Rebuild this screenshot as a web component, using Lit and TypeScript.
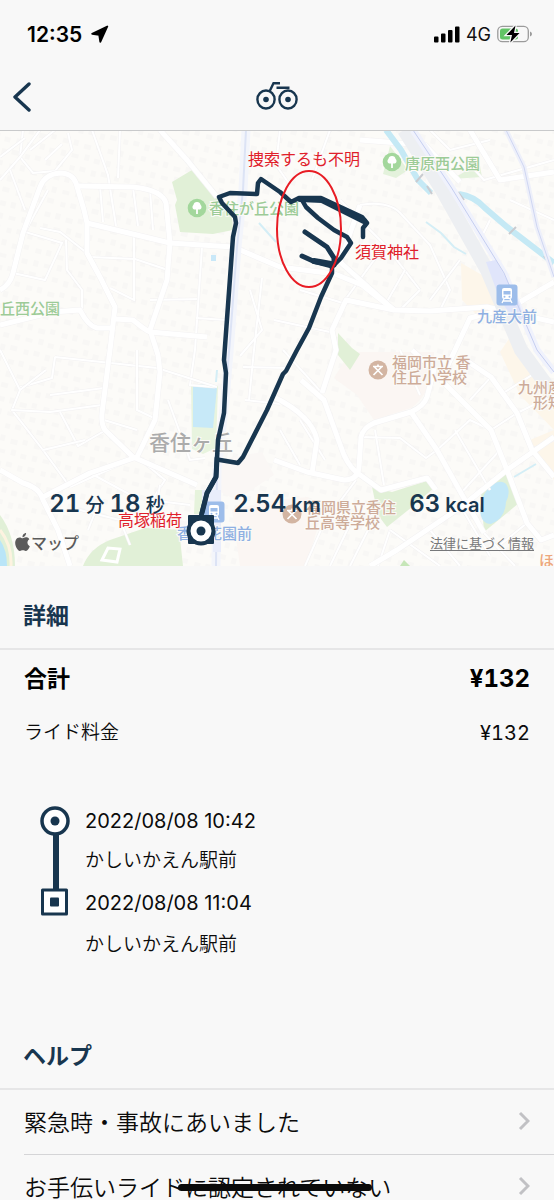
import { LitElement, html, svg, css } from "lit";
import { customElement } from "lit/decorators.js";

const MAIN_ROADS = [
  "M0 290Q10 285 13 273L23 233L40 187Q45 174 60 173Q72 173 76 183L84 210L87 223V253L100 277L115 307L110 350L102 413Q101 424 105 430L133 457L197 485",
  "M78 186L133 187Q162 190 166 203L170 243L167 280L150 330L158 355L160 372L155 420L137 457L90 473L43 497",
  "M87 223L170 243L233 247L280 267L335 274L362 285L394 310L430 311L487 307L554 322",
  "M160 130L187 160L217 197",
  "M0 325L53 312L80 310Q88 326 97 328H112",
  "M115 319L133 320Q145 330 150 332L207 337",
  "M0 470L23 483Q40 488 43 500L58 530L70 566",
  "M274 460L307 472L344 480Q358 480 359 467L361 437Q363 428 374 423L411 412Q424 406 427 397L434 370L412 350",
  "M274 397Q312 416 317 440L312 473",
  "M301 380L324 400L341 447Q346 463 356 472L381 490L427 478L436 490",
  "M411 412L437 450L461 493L484 533",
  "M441 380L491 430L507 470L527 523L541 540L554 535",
  "M461 357L491 377L517 413L532 450L554 477",
  "M554 437L507 470L461 507L397 550L370 566",
  "M394 310L340 262L360 205",
  "M394 310L346 300L332 330L336 350L322 393",
  "M360 140L425 145L460 182",
  "M554 282L510 308L470 318L441 380",
  "M470 130L500 180L554 172",
];

const MINOR_ROADS = [
  "M23 130L20 157L33 173L55 171L72 150L68 133",
  "M0 157L25 138M0 180L20 157L40 130M30 150L55 130M45 160L62 144",
  "M92 130L108 175L116 226M120 130L118 178M133 187L138 226M150 190L153 230M100 186L103 222",
  "M10 170L25 210M13 273L45 280L62 243L25 232L48 190",
  "M87 253L60 232L40 228M66 240L67 270L82 290V309",
  "M90 257L135 259L168 270M134 235V300L110 288M150 300L200 299",
  "M202 247L195 350L190 385L215 387M196 318L226 320",
  "M55 357L157 368L217 387M55 357L52 378L18 388",
  "M0 350L20 390L12 410L43 450L70 487M20 390L46 370",
  "M12 410L50 412L102 405M60 412L78 446L106 430M50 395L104 388",
  "M43 450L85 440M70 487L137 457L165 480L152 500M90 473L140 500",
  "M137 350V410L154 418M104 420L137 430M168 400L190 460L205 458",
  "M250 290L262 330L240 356M262 278L254 350L249 400M243 367L290 368M245 400L280 404",
  "M280 130L276 165L290 185M330 130L312 180M340 200L385 245L420 290",
  "M360 205Q390 200 402 215L430 245L450 290L440 310",
  "M385 245L345 300M405 270L385 305M420 290L400 310M460 260L430 300M300 290L346 304",
  "M430 130L450 150L490 140M466 160L484 180L554 160M490 220L480 240M510 200L554 220",
  "M274 320L330 332M283 350L322 393M300 420L325 460M280 430L300 465",
  "M361 437L400 438L426 458L437 450M375 430L384 485M400 350L420 395",
  "M437 450L470 420L491 430M461 493L500 450M455 430L490 490M491 377L470 400",
  "M517 413L491 430M500 395L540 370M517 413L554 395M530 450L554 440",
  "M324 523L356 480M305 566L324 523L360 520M330 566L350 524M350 566L368 530M378 566L390 530",
  "M390 530L440 566M430 530L460 566M461 507L490 556M484 533L515 566M527 523L500 545",
  "M80 510L120 520L130 545M100 500L88 530M150 500L190 505M160 485L155 515",
];

const PARK_TREE = "M0-6a3.6 3.6 0 0 1 3.6 3a2.8 2.8 0 0 1-.6 4.6H.9V6H-.9V1.600H-3a2.800 2.800 0 0 1-.6-4.600A3.600 3.600 0 0 1 0-6z";

const parkPin = (x: number, y: number) => svg`
  <g transform="translate(${x} ${y})">
    <circle r="9.300" fill="#a3d79c" />
    <path d=${PARK_TREE} fill="#fff" />
  </g>`;

const schoolPin = (x: number, y: number) => svg`
  <g transform="translate(${x} ${y})">
    <circle r="9.500" fill="#d3b5a2" />
    <path d="M-5-3.500H5M0-5.500V-3.500M-3.500-3L4.500 5M3.500-3L-4.500 5" fill="none" stroke="#fff" stroke-width="1.700" />
  </g>`;

const stationPin = (x: number, y: number) => svg`
  <g transform="translate(${x} ${y})">
    <rect x="-10.500" y="-10.500" width="21" height="21" rx="3" fill="#9dbdea" />
    <rect x="-5" y="-7" width="10" height="11" rx="2" fill="#fff" />
    <rect x="-3.500" y="-4" width="7" height="3.500" fill="#9dbdea" />
    <circle cx="-2.500" cy="1.700" r="1" fill="#9dbdea" />
    <circle cx="2.500" cy="1.700" r="1" fill="#9dbdea" />
    <path d="M-3 4L-5 8M3 4L5 8M-4 6H4" stroke="#fff" stroke-width="1.300" />
  </g>`;

@customElement("ride-map")
class RideMap extends LitElement {
  static styles = css`
    :host { display: block; }
    .map { display: block; width: 100%; height: auto; background: #fcfbf8; }
    .label { font-family: "Noto Sans CJK JP", sans-serif; font-size: 15px; font-weight: 500; paint-order: stroke; stroke: #fcfbf8; stroke-width: 2px; }
    .park { fill: #9ccb97; }
    .station { fill: #8fb0e2; }
    .school { fill: #cdab99; }
    .shop { fill: #eda77c; }
    .town { font-size: 21px; fill: #ababab; }
    .note { font-family: "Noto Sans CJK JP", sans-serif; font-size: 16px; fill: #e0202a; }
  `;

  render() {
    return html`
      <svg class="map" viewBox="0 131 554 435" role="img" aria-label="ライドの経路">
        <defs>
          <pattern id="houses" width="46" height="38" patternUnits="userSpaceOnUse" patternTransform="rotate(14)">
            <path d="M3 4h6v5h-6zM14 3h5v6h-5zM25 5h7v5h-7zM37 3h5v5h-5zM4 16h5v6h-5zM15 17h7v4h-7zM28 15h5v6h-5zM38 17h6v5h-6zM2 28h7v5h-7zM16 29h5v5h-5zM26 28h6v5h-6zM38 29h5v6h-5z" fill="#f8f7f5" />
          </pattern>
        </defs>

        <rect y="131" width="554" height="435" fill="#fcfbf8" />
        <rect y="131" width="554" height="435" fill="url(#houses)" />
        <path d="M350 352L434 352L434 372Q426 398 411 408L374 420L357 395L334 378Z" fill="#fbf6f3" />
        <path d="M274 500L308 497L320 520L306 566H240L232 510Z" fill="#fbf6f3" />
        <path d="M218 460L262 452L274 475L236 500L217 490Z" fill="#faf7f5" />
        <path d="M461 263L482 275L500 310L480 318L462 300Z" fill="#fdf6ea" />
        <path d="M515 330L525 350L554 390V480L530 440L554 430L520 395L500 352Z" fill="#fdf6ea" />

        <path d="M192 170L172 182L177 200L175 205L180 232L213 234L233 230L232 218L220 202Z" fill="#e1f0d7" />
        <path d="M390 146L383 174L396 178L408 170Z" fill="#e4f2dc" />
        <path d="M479 160L468 170L452 179L482 177Z" fill="#e4f2dc" />
        <path d="M338 333L352 348L360 354L350 370L338 355Z" fill="#e1f0d7" />
        <path d="M191 384L218 386L216 448L203 454L192 449Z" fill="#e8f4df" />
        <path d="M193 386Q205 382 217 388L213 428L193 427Z" fill="#c7e9f8" />
        <path d="M195 490h9v24h-10z" fill="#e6f3dc" />
        <path d="M83 566Q90 548 110 540L145 528L183 530L180 538L183 566Z" fill="#e1f0d7" />
        <path d="M102 560L108 548L120 549L117 562Z" fill="none" stroke="#fff" stroke-width="3" />
        <path d="M0 515Q15 535 15 566H0Z" fill="#e1f0d7" />
        <path d="M0 540Q7 550 7 566H0Z" fill="#b9e5f8" />
        <path d="M0 530Q12 545 11 566" fill="none" stroke="#fdf3e0" stroke-width="3" />
        <path d="M372 487L392 492L430 480L436 486L412 507L387 527L378 515Z" fill="#e1f0d7" />
        <path d="M481 492L507 473L519 503L484 532Z" fill="#e1f0d7" />
        <path d="M493 484Q505 478 508 488Q510 494 506 502Q505 519 491 524Q481 524 480 510Q481 493 493 484Z" fill="#c3e8f8" />
        <path d="M400 566l4-6l6 6z" fill="#c6e6b8" />

        ${MINOR_ROADS.map((d) => svg`<path d=${d} fill="none" stroke="#f2f1f2" stroke-width="3" /><path d=${d} fill="none" stroke="#fff" stroke-width="2" />`)}
        ${MAIN_ROADS.map((d) => svg`<path d=${d} fill="none" stroke="#f3f2f3" stroke-width="6" stroke-linejoin="round" />`)}
        ${MAIN_ROADS.map((d) => svg`<path d=${d} fill="none" stroke="#fff" stroke-width="5" stroke-linejoin="round" />`)}

        <path d="M386 130L401 150L418 180L431 193M459 194Q474 196 485 208L507 227L554 263" fill="none" stroke="#c5e9f5" stroke-width="6" />
        <path d="M426 222L441 233L454 247L466 254M259 223L276 242M514 477L536 464M217 370l-1 12" fill="none" stroke="#d4eef6" stroke-width="2" />
        <rect x="211" y="255" width="5" height="6" fill="#c9e8f8" />
        <path d="M416 182l7-8M427 186l5 8M458 192l6 8M509 234l7-7M544 256l6 8" stroke="#c9cbd0" stroke-width="2" />

        <path d="M246 130L243 190L237 247L230 340L225 400L217 470L216 566" fill="none" stroke="#f3f5fb" stroke-width="9" />
        <path d="M246 130L243 190L237 247L230 340L225 400L217 470L216 566" fill="none" stroke="#dce3f5" stroke-width="2" />
        <path d="M202 490h19v62h-8v-35h-11z" fill="#e9edfb" />
        <path d="M506 130L524 167L537 227L554 277" fill="none" stroke="#eef0fa" stroke-width="5" />
        <path d="M506 130L524 167L537 227L554 277" fill="none" stroke="#cfd6f2" stroke-width="1" />
        <path d="M404 130L442 190L487 270L521 350L554 395" fill="none" stroke="#edeff2" stroke-width="14" />
        <path d="M413 130L451 187L504 273L537 350L554 372" fill="none" stroke="#f0f2fc" stroke-width="7" />
        <path d="M486 262L496 260L518 300L524 318L516 322L500 300Z" fill="#e0e5fb" />
        <path d="M413 130L451 187L504 273L537 350L554 372" fill="none" stroke="#c5cef0" stroke-width="1" />

        ${parkPin(197, 208)} ${parkPin(392, 162)}
        ${stationPin(507, 295)} ${stationPin(214, 512)}
        ${schoolPin(378, 370)} ${schoolPin(292, 514)}

        <text class="label park" x="209" y="214">香住が丘公園</text>
        <text class="label park" x="405" y="169">唐原西公園</text>
        <text class="label park" x="0" y="314">丘西公園</text>
        <text class="label station" x="477" y="322">九産大前</text>
        <text class="label station" x="177" y="539">香椎花園前</text>
        <text class="label school" x="392" y="368">福岡市立 香</text>
        <text class="label school" x="392" y="383">住丘小学校</text>
        <text class="label school" x="306" y="513">福岡県立香住</text>
        <text class="label school" x="305" y="528">丘高等学校</text>
        <text class="label school" x="518" y="393">九州産業</text>
        <text class="label school" x="533" y="408">形短大</text>
        <text class="label shop" x="539" y="566">ほっと</text>
        <text class="label town" x="149" y="450">香住ヶ丘</text>

        <g fill="none" stroke="#18364f" stroke-width="5" stroke-linejoin="round" stroke-linecap="round">
          <path d="M201 516L207 493L216 477L218 440L224 413L226 373L224 360L233 237L236 223L235 217L222 203L219 197L230 193L257 194L258 183L261 179L280 192L291 202L299 198L321 198L362 217L367 223L363 228V237" stroke-width="4.500" />
          <path d="M300 199L322 200L364 221" stroke-width="6" />
          <path d="M302 200L306 207L318 218L334 230L347 237L351 243L341 258L332 267V273L321 297L309 328L297 350L286 371L283 374L267 410L243 457L238 463L220 460" stroke-width="4.500" />
          <path d="M305 232L327 247L334 258V265" />
          <path d="M302 256L313 261L332 266" />
          <path d="M314 261L331 264" stroke-width="6" />
          <path d="M217 458L216 477L207 493L202 513" />
        </g>
        <rect x="188" y="515" width="26" height="29" rx="1" fill="#18364f" />
        <circle cx="201" cy="531" r="12.500" fill="#fff" stroke="#18364f" stroke-width="4" />
        <circle cx="201" cy="531" r="4.500" fill="#18364f" />

        <ellipse cx="309" cy="229" rx="32" ry="58" fill="none" stroke="#e81c24" stroke-width="2" />
        <text class="note" x="248" y="165">捜索するも不明</text>
        <text class="note" x="355" y="258">須賀神社</text>
        <text class="note" x="118" y="526">高塚稲荷</text>
      </svg>
    `;
  }
}

@customElement("app-root")
class AppRoot extends LitElement {
  static styles = css`
    :host {
      display: flex; flex-direction: column; height: 100vh; overflow: hidden;
      background: #f8f8f8; color: #0b0b0b;
      font-family: Inter, "Noto Sans CJK JP", sans-serif; font-size: 20px;
    }
    * { box-sizing: border-box; }
    svg { display: block; flex: none; }
    .top { border-bottom: 1px solid #c9cacb; }
    .status { display: flex; align-items: center; justify-content: space-between; height: 68px; padding: 0 22px 0 27px; }
    .clock { display: flex; align-items: center; gap: 9px; font-size: 21px; font-weight: 600; color: #000; }
    .signals { display: flex; align-items: center; gap: 6px; font-size: 18px; color: #111; }
    .nav { display: grid; grid-template-columns: 1fr auto 1fr; align-items: center; height: 62px; padding: 0 12px 4px; }
    .back { justify-self: start; border: 0; padding: 0; background: none; cursor: pointer; }
    .scroll { flex: 1; min-height: 0; overflow-y: auto; scrollbar-width: none; }
    .hero { position: relative; }
    .overlay { position: absolute; left: 0; right: 0; bottom: 0; padding-bottom: 12px; display: grid; gap: 10px; }
    .stats { display: grid; grid-template-columns: repeat(3, 1fr); margin: 0; padding: 0 22px; text-align: center; color: #18364f; font-weight: 600; line-height: 30px; white-space: nowrap; }
    .num { font-size: 24px; font-variant-numeric: tabular-nums; }
    .unit { font-family: "Noto Sans CJK JP", sans-serif; font-size: 19px; font-weight: 500; }
    .stats p { margin: 0; }
    .credit { display: flex; justify-content: space-between; align-items: center; height: 24px; padding: 0 20px 0 15px; }
    .brand { display: flex; align-items: center; gap: 1px; font-size: 16px; font-weight: 500; color: #5b5b5b; }
    .legal { font-size: 13px; color: #77787a; text-decoration: underline; text-underline-offset: 2px; }
    h2 { margin: 0; padding: 33px 23px 15px; border-bottom: 2px solid #e6e6e7; font-size: 23px; line-height: 34px; font-weight: 700; color: #18364f; }
    .costs { display: grid; gap: 18px; margin: 0; padding: 11px 24px 0; line-height: 36px; }
    .cost { display: flex; justify-content: space-between; }
    .cost dd { margin: 0; font-size: 20px; font-variant-numeric: tabular-nums; }
    .cost dt { font-size: 19px; font-weight: 350; }
    .cost.total { font-weight: 700; color: #000; }
    .cost.total dt { font-size: 23px; font-weight: 700; }
    .cost.total dd { font-size: 24px; }
    .trip { display: flex; gap: 15px; padding: 55px 40px 46px; }
    .stops { display: grid; gap: 12px; margin: 0; padding: 0; list-style: none; line-height: 30px; }
    .stop { display: grid; gap: 10px; }
    .stop:last-child { gap: 12px; }
    .place { font-size: 19px; font-weight: 350; }
    .help { margin: 0; padding: 0 0 0 24px; list-style: none; }
    .help li + li { border-top: 1px solid #d5d5d7; }
    .row { display: flex; align-items: center; justify-content: space-between; width: 100%; height: 64px; padding: 0 24px 2px 0; border: 0; background: none; font: inherit; font-size: 23px; font-weight: 350; color: inherit; text-align: left; white-space: nowrap; cursor: pointer; }
    .struck { position: relative; }
    .struck::after { content: ""; position: absolute; left: -7px; right: -4px; top: 50%; height: 7px; margin-top: -4px; border-radius: 4px; background: #0b0b0b; }
  `;

  private chevron() {
    return html`<svg width="12" height="20" viewBox="0 0 12 20" aria-hidden="true"><path d="M2 2L10 10L2 18" fill="none" stroke="#c1c1c4" stroke-width="3" /></svg>`;
  }

  render() {
    return html`
      <header class="top">
        <div class="status">
          <div class="clock">
            <span>12:35</span>
            <svg width="18" height="18" viewBox="0 0 18 18" aria-hidden="true"><path d="M16.300 1.500L1.200 8.800L8.200 9.800L9.300 16.800Z" fill="#000" stroke="#000" stroke-width="1.800" stroke-linejoin="round" /></svg>
          </div>
          <div class="signals">
            <svg width="26" height="17" viewBox="0 0 26 17" aria-hidden="true"><path d="M1 10.500h2.500a1 1 0 0 1 1 1v4a1 1 0 0 1-1 1H1a1 1 0 0 1-1-1v-4a1 1 0 0 1 1-1zM8 7.500h2.500a1 1 0 0 1 1 1v7a1 1 0 0 1-1 1H8a1 1 0 0 1-1-1v-7a1 1 0 0 1 1-1zM15 4h2.500a1 1 0 0 1 1 1v10.500a1 1 0 0 1-1 1h-2.500a1 1 0 0 1-1-1V5a1 1 0 0 1 1-1zM22 .500h2.500a1 1 0 0 1 1 1v14a1 1 0 0 1-1 1h-2.500a1 1 0 0 1-1-1v-14a1 1 0 0 1 1-1z" fill="#000" /></svg>
            <span>4G</span>
            <svg width="35" height="18" viewBox="0 0 35 18" aria-hidden="true">
              <rect x=".8" y="1.300" width="30.500" height="15.400" rx="4.500" fill="none" stroke="#9b9b9b" stroke-width="1.300" />
              <path d="M33 6.500q2 .7 2 2.500t-2 2.500z" fill="#9b9b9b" />
              <rect x="3" y="3.500" width="18" height="11" rx="2.500" fill="#62c466" />
              <path d="M18.500.5L9.500 10H15L13.300 17.500L22.500 8H17Z" fill="#000" stroke="#f8f8f8" stroke-width="2.600" paint-order="stroke" />
            </svg>
          </div>
        </div>
        <nav class="nav">
          <button class="back" aria-label="戻る">
            <svg width="20" height="30" viewBox="0 0 20 30"><path d="M17 2L3 15L17 28" fill="none" stroke="#18364f" stroke-width="3.400" stroke-linecap="round" stroke-linejoin="round" /></svg>
          </button>
          <svg width="42" height="30" viewBox="0 0 42 30" role="img" aria-label="自転車">
            <g fill="none" stroke="#18364f" stroke-width="2.400">
              <ellipse cx="10" cy="17.500" rx="8.600" ry="9" /><ellipse cx="32" cy="17.500" rx="8.600" ry="9" />
              <path d="M13.500 9.500L17.500 1.200H24M20.500 5.700H33.500" />
            </g>
            <circle cx="10" cy="17.500" r="2.800" fill="#18364f" /><circle cx="32" cy="17.500" r="2.800" fill="#18364f" />
          </svg>
        </nav>
      </header>

      <main class="scroll">
        <section class="hero">
          <ride-map></ride-map>
          <div class="overlay">
            <div class="stats">
              <p><span class="num">21</span> <span class="unit">分</span> <span class="num">18</span> <span class="unit">秒</span></p>
              <p><span class="num">2.54</span> km</p>
              <p><span class="num">63</span> kcal</p>
            </div>
            <div class="credit">
              <span class="brand">
                <svg width="15" height="18" viewBox="2 0 20 24" aria-hidden="true"><path fill="#5b5b5b" d="M12.152 6.896c-.948 0-2.415-1.078-3.960-1.040-2.040.027-3.910 1.183-4.961 3.014-2.117 3.675-.546 9.103 1.519 12.090 1.013 1.454 2.208 3.090 3.792 3.039 1.520-.065 2.090-.987 3.935-.987 1.831 0 2.350.987 3.960.948 1.637-.026 2.676-1.480 3.676-2.948 1.156-1.688 1.636-3.325 1.662-3.415-.039-.013-3.182-1.221-3.220-4.857-.026-3.040 2.480-4.494 2.597-4.559-1.429-2.090-3.623-2.324-4.390-2.376-2-.156-3.675 1.090-4.610 1.090zM15.530 3.830c.843-1.012 1.400-2.427 1.245-3.830-1.207.052-2.662.805-3.532 1.818-.78.896-1.454 2.338-1.273 3.714 1.338.104 2.715-.688 3.559-1.701" /></svg>
                <span>マップ</span>
              </span>
              <a class="legal" href="#legal">法律に基づく情報</a>
            </div>
          </div>
        </section>

        <section>
          <h2>詳細</h2>
          <dl class="costs">
            <div class="cost total"><dt>合計</dt><dd>¥132</dd></div>
            <div class="cost"><dt>ライド料金</dt><dd>¥132</dd></div>
          </dl>
          <div class="trip">
            <svg width="30" height="110" viewBox="0 0 30 110" aria-hidden="true">
              <path d="M16 28V84" stroke="#18364f" stroke-width="6" />
              <circle cx="15" cy="15" r="13" fill="#fff" stroke="#18364f" stroke-width="3.500" />
              <circle cx="15" cy="15" r="4.500" fill="#18364f" />
              <rect x="2.500" y="84" width="24" height="24" fill="#fff" stroke="#18364f" stroke-width="3" stroke-linejoin="round" />
              <rect x="10" y="91.500" width="9" height="9" rx="1" fill="#18364f" />
            </svg>
            <ol class="stops">
              <li class="stop"><time datetime="2022-08-08T10:42">2022/08/08 10:42</time><span class="place">かしいかえん駅前</span></li>
              <li class="stop"><time datetime="2022-08-08T11:04">2022/08/08 11:04</time><span class="place">かしいかえん駅前</span></li>
            </ol>
          </div>
        </section>

        <section>
          <h2>ヘルプ</h2>
          <ul class="help">
            <li><button class="row"><span>緊急時・事故にあいました</span>${this.chevron()}</button></li>
            <li><button class="row"><span>お手伝いライド<span class="struck">に認定されていな</span>い</span>${this.chevron()}</button></li>
          </ul>
        </section>
      </main>
    `;
  }
}
